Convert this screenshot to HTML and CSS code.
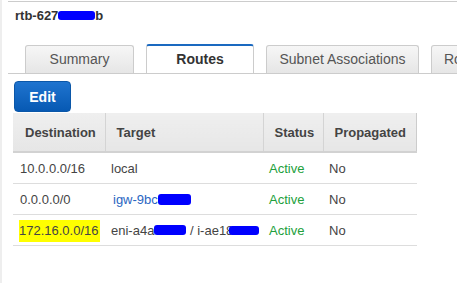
FILE: index.html
```html
<!DOCTYPE html>
<html lang="en">
<head>
  <meta charset="UTF-8">
  <title>Route Table</title>
  <link rel="stylesheet" href="styles.css">
</head>
<body>
  <div class="page">
    <div class="panel">
      <!-- Route table name -->
      <div class="title">rtb-627<span class="redact title-redact"></span>b</div>

      <div class="tabs">
        <div class="tab tab-summary">Summary</div>
        <div class="tab tab-routes active">Routes</div>
        <div class="tab tab-subnets">Subnet Associations</div>
        <div class="tab tab-more">Route Propagation</div>
      </div>

      <button class="btn-edit">Edit</button>

      <table class="routes">
        <thead>
          <tr>
            <th class="col-dest">Destination</th>
            <th class="col-target">Target</th>
            <th class="col-status">Status</th>
            <th class="col-prop">Propagated</th>
          </tr>
        </thead>
        <tbody>
          <tr>
            <td>10.0.0.0/16</td>
            <td>local</td>
            <td class="active-status">Active</td>
            <td>No</td>
          </tr>
          <tr>
            <td>0.0.0.0/0</td>
            <td><a class="link">igw-9bc<span class="redact igw-redact"></span></a></td>
            <td class="active-status">Active</td>
            <td>No</td>
          </tr>
          <tr>
            <td><span class="highlight">172.16.0.0/16</span></td>
            <td>eni-a4a<span class="redact eni-redact"></span> / i-ae18<span class="redact inst-redact"></span></td>
            <td class="active-status">Active</td>
            <td>No</td>
          </tr>
        </tbody>
      </table>
    </div>
  </div>
</body>
</html>
```

FILE: styles.css
```css
html, body {
  margin: 0;
  padding: 0;
  background: #fff;
}
body {
  font-family: "Liberation Sans", Arial, sans-serif;
  color: #444;
  width: 457px;
  height: 283px;
  overflow: hidden;
}
.page {
  border-left: 2px solid #eeeeee;
  height: 283px;
  padding: 1px 0 0 6px;
  box-sizing: border-box;
}
.panel {
  border-top: 1px solid #cccccc;
}
.title {
  font-size: 13px;
  line-height: 16px;
  font-weight: bold;
  color: #333;
  margin: 6px 0 0 7px;
  height: 16px;
}
.redact {
  display: inline-block;
  background: #0000ff;
  border-radius: 3px;
  vertical-align: middle;
}
.title-redact {
  width: 37px;
  height: 9px;
  margin-top: -3px;
}
.tabs {
  display: flex;
  align-items: flex-end;
  gap: 12px;
  padding-left: 17px;
  margin-top: 20px;
  height: 29px;
  border-bottom: 1px solid #cccccc;
  overflow: hidden;
}
.tab {
  flex: none;
  box-sizing: border-box;
  height: 28px;
  line-height: 26px;
  font-size: 14px;
  color: #555;
  text-align: center;
  border: 1px solid #cccccc;
  border-bottom: none;
  border-radius: 3px 3px 0 0;
  background: linear-gradient(#f6f6f6, #e6e6e6);
}
.tab.active {
  height: 30px;
  margin-bottom: -1px;
  border-top: 2px solid #1a69c0;
  background: #fff;
  color: #333;
  font-weight: bold;
  line-height: 27px;
}
.tab-summary {
  width: 109px;
}
.tab-routes {
  width: 108px;
}
.tab-subnets {
  width: 153px;
}
.tab-more {
  width: 120px;
  text-align: left;
  padding-left: 12px;
}
.btn-edit {
  display: block;
  margin: 7px 0 0 6px;
  width: 57px;
  height: 31px;
  border: 1px solid #0b57a8;
  border-radius: 4px;
  background: linear-gradient(#1f74cf, #0759b3);
  color: #fff;
  font-family: "Liberation Sans", Arial, sans-serif;
  font-size: 14px;
  font-weight: bold;
  padding: 0;
}
.routes {
  border-collapse: collapse;
  margin: 1px 0 0 5px;
  width: 404px;
  font-size: 13px;
}
.routes th {
  height: 39px;
  box-sizing: border-box;
  background: linear-gradient(#efefef, #e6e6e6);
  text-align: left;
  font-weight: bold;
  color: #444;
  padding: 0 0 0 11px;
  border-bottom: 2px solid #d2d2d2;
  border-left: 1px solid #fafafa;
  border-right: 1px solid #d4d4d4;
}
.routes th.col-dest {
  width: 92px;
  border-left: none;
  padding-left: 12px;
}
.routes th.col-target {
  width: 158px;
}
.routes th.col-status {
  width: 60px;
}
.routes th.col-prop {
  border-right: 1px solid #cccccc;
}
.routes td {
  height: 30px;
  padding: 0 0 0 6px;
  border-bottom: 1px solid #dddddd;
  color: #444;
  white-space: nowrap;
}
.routes td:first-child {
  padding-left: 7px;
}
.active-status {
  color: #22a03c !important;
}
.link {
  color: #2a66c2;
  margin-left: 2px;
}
.highlight {
  background: #ffff00;
  padding: 3px 1px 4px 0;
  margin-left: -1px;
}
.igw-redact {
  width: 33px;
  height: 11px;
  margin-top: -2px;
}
.eni-redact {
  width: 32px;
  height: 10px;
  margin-top: -2px;
}
.inst-redact {
  width: 30px;
  height: 9px;
  margin-left: -4px;
  margin-top: -1px;
}
```
